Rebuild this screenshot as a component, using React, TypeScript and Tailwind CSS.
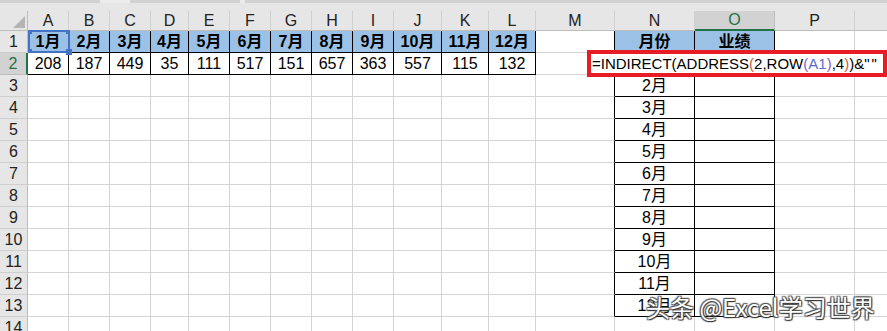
import React from 'react';

const COLS = ['A','B','C','D','E','F','G','H','I','J','K','L','M','N','O','P','Q'];
const MONTHS = ['1月','2月','3月','4月','5月','6月','7月','8月','9月','10月','11月','12月'];
const VALUES = [208,187,449,35,111,517,151,657,363,557,115,132];
const ROWS = 14;

// table ranges: A1:L2 and N1:O13
const inTable = (r: number, c: number) =>
  (r >= 1 && r <= 2 && c >= 0 && c <= 11) || (r >= 1 && r <= 13 && c >= 13 && c <= 14);

function cellContent(r: number, c: number) {
  if (r === 1 && c <= 11) return { text: MONTHS[c], head: true };
  if (r === 2 && c <= 11) return { text: String(VALUES[c]), head: false };
  if (r === 1 && c === 13) return { text: '月份', head: true };
  if (r === 1 && c === 14) return { text: '业绩', head: true };
  if (r >= 2 && r <= 13 && c === 13) return { text: MONTHS[r - 2], head: false };
  return { text: '', head: false };
}

function Cell({ r, c }: { r: number; c: number }) {
  const { text, head } = cellContent(r, c);
  const blackRight = inTable(r, c) || inTable(r, c + 1);
  const blackBottom = inTable(r, c) || inTable(r + 1, c);
  const blue = head && inTable(r, c);
  return (
    <div
      className={[
        'h-[22px] flex items-center justify-center border-r border-b text-[16px] text-black leading-none',
        blackRight ? 'border-r-black' : 'border-r-[#d4d4d4]',
        blackBottom ? 'border-b-black' : 'border-b-[#d4d4d4]',
        blue ? 'bg-[#9bc2e6] font-bold' : 'bg-white',
      ].join(' ')}
    >
      {text}
    </div>
  );
}

export default function App() {
  const rows = Array.from({ length: ROWS }, (_, i) => i + 1);
  return (
    <div
      className="relative w-[887px] h-[331px] overflow-hidden bg-white"
      style={{ fontFamily: '"Liberation Sans","Noto Sans CJK SC",sans-serif' }}
    >
      {/* ribbon remnant */}
      <div className="h-[3px] bg-[#d2d2d2] flex">
        <div className="w-[100px]" />
        <div className="w-[30px] bg-[#ececec]" />
        <div className="w-[110px]" />
        <div className="w-[5px] bg-[#ececec]" />
      </div>

      <div className="grid w-[940px] grid-cols-[28px_41px_41px_41px_38px_41px_41px_41px_41px_41px_48px_47px_47px_79px_80px_80px_80px_86px]">
        {/* column headers */}
        <div className="h-[28px] bg-[#e6e6e6] flex flex-col">
          <div className="h-[8px]" />
          <div className="flex-1 border-r border-b border-[#bdbdbd] flex items-end justify-end pr-[2px] pb-[2px]">
            <svg width="12" height="12" viewBox="0 0 12 12"><path d="M12 0 L12 12 L0 12 Z" fill="#b5b5b5" /></svg>
          </div>
        </div>
        {COLS.map((l, c) => (
          <div key={l} className="h-[28px] bg-[#e6e6e6] flex flex-col">
            <div className="h-[8px]" />
            {c === 14 ? (
              <div className="flex-1 bg-[#d2d2d2] border-r border-r-[#bdbdbd] border-b-2 border-b-[#217346] flex items-center justify-center text-[16px] text-[#217346] leading-none">
                {l}
              </div>
            ) : (
              <div className="flex-1 border-r border-r-[#d0d0d0] border-b border-b-[#bdbdbd] flex items-center justify-center text-[16px] text-[#222] leading-none">
                {l}
              </div>
            )}
          </div>
        ))}

        {rows.map(r => (
          <React.Fragment key={r}>
            {r === 2 ? (
              <div className="h-[22px] bg-[#d2d2d2] border-r-2 border-r-[#217346] border-b border-b-[#bdbdbd] flex items-center justify-center text-[16px] text-[#217346] leading-none">
                {r}
              </div>
            ) : (
              <div className="h-[22px] bg-[#e6e6e6] border-r border-r-[#bdbdbd] border-b border-b-[#cfcfcf] flex items-center justify-center text-[16px] text-[#222] leading-none">
                {r}
              </div>
            )}
            {COLS.map((_, c) => <Cell key={c} r={r} c={c} />)}
          </React.Fragment>
        ))}
      </div>

      {/* A1 reference highlight */}
      <div className="absolute left-[28px] top-[30px] w-[42px] h-[23px] border-2 border-[#4472c4]">
        <div className="absolute -left-[2px] -top-[2px] w-[4px] h-[4px] bg-[#4472c4]" />
        <div className="absolute -right-[2px] -top-[2px] w-[4px] h-[4px] bg-[#4472c4]" />
        <div className="absolute -left-[2px] -bottom-[2px] w-[4px] h-[4px] bg-[#4472c4]" />
        <div className="absolute -right-[4px] -bottom-[4px] w-[6px] h-[6px] bg-[#4472c4]" />
      </div>

      {/* formula being edited */}
      <div className="absolute left-[587px] top-[50px] w-[300px] h-[27px] border-4 border-[#e81c24] bg-white flex items-center pl-[1px] text-[15px] text-black whitespace-nowrap leading-none">
        <span>=INDIRECT(ADDRESS</span>
        <span className="text-[#d5573b]">(</span>
        <span>2,ROW</span>
        <span className="text-[#8e5bc8]">(</span>
        <span className="text-[#5e6ad2]">A1</span>
        <span className="text-[#8e5bc8]">)</span>
        <span>,4</span>
        <span className="text-[#d5573b]">)</span>
        <span>)&amp;"</span>
        <span className="ml-[2px]">"</span>
      </div>

      {/* watermark */}
      <div
        className="absolute left-[646px] top-[295px] text-[24px] text-white whitespace-nowrap leading-none [text-shadow:1px_1px_1px_#333,-1px_-1px_1px_#555,1px_-1px_1px_#555,-1px_1px_1px_#555]"
        style={{ fontFamily: '"Noto Sans CJK SC","Liberation Sans",sans-serif' }}
      >
        头条 @Excel学习世界
      </div>
    </div>
  );
}
